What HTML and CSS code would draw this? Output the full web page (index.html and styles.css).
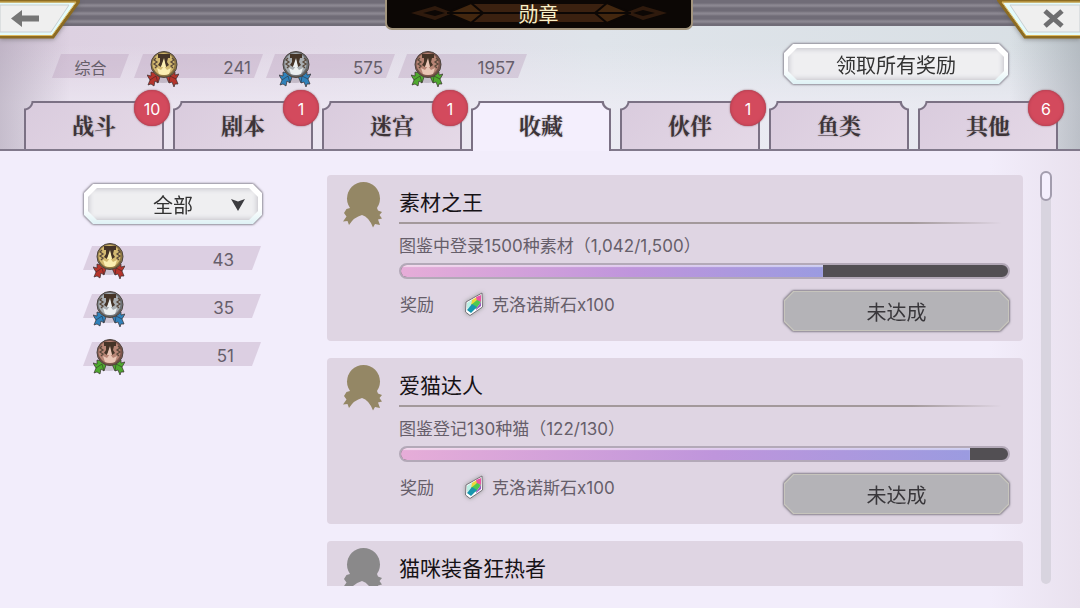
FILE: index.html
```
<!DOCTYPE html>
<html lang="zh-CN">
  <head>
    <meta charset="UTF-8">
    <meta name="viewport" content="width=device-width, initial-scale=1.0">
    <title>勋章</title>
    <link rel="stylesheet" href="styles.css">
  </head>

  <body>
    <svg class="sprite" aria-hidden="true">
      <symbol id="medal" viewBox="0 0 32 38">
        <ellipse cx="16" cy="29" rx="9" ry="4" fill="#5a4a5a" opacity=".25"/>
        <path d="M4 22 L14 24 L11 33 L8 31 L7 36 L4 34 L1 35 L3 30 L0 25 L4 26 Z M28 22 L18 24 L22 33 L25 32 L27 37 L28 34 L31 34 L29 29 L32 24 L28 25 Z" fill="var(--ribbon)" stroke="#3a2f2f" stroke-width=".7" stroke-linejoin="round"/>
        <path d="M3 30 L9 26 L11 33 M29 29 L23 26 L22 33" fill="none" stroke="#2a2024" stroke-width="1" opacity=".5"/>
        <circle cx="17" cy="14.500" r="13" fill="var(--rim)" stroke="#4c4440" stroke-width="1"/>
        <circle cx="16.500" cy="14" r="11" fill="var(--coin)"/>
        <path d="M11 4 H23 V8 H21 L20 12 L22 15 L19 17 L17 10 L14 17 L11 15 L13 12 V8 H11 Z" fill="#453427"/>
        <path d="M17 8 L19 17 H14 Z" fill="var(--shine)"/>
        <path d="M9 8 L7 10 L10 12 L7 14 L10 16 L8 18 M25 8 L27 10 L24 12 L27 14 L24 16 L26 18" fill="none" stroke="#5a493b" stroke-width="1.300"/>
        <path d="M10 18 L14 20 L17 16 L20 20 L24 18 L22 24 Q17 26 12 24 Z" fill="var(--shine)"/>
        <path d="M6 19 Q10 27 17 27 Q24 27 28 19" fill="none" stroke="#5a493b" stroke-width="1" opacity=".6"/>
      </symbol>
      <symbol id="medal-shape" viewBox="0 0 40 46">
        <circle cx="20.500" cy="16.500" r="16.500" fill="currentColor"/>
        <path d="M7 26 L34 26 L35 28.500 L39 30 L36.500 33 L39 36.500 L35 37.500 L37 43 L32 42 L30 45.500 Q26 35 19 33 Q11 35 6 43 L4.500 39 L0 39.500 L3.500 34.500 L1 31 L3.500 27 Z" fill="currentColor"/>
      </symbol>
      <symbol id="gem" viewBox="0 0 20 24">
        <path d="M2 10 L18 1 L18.500 15 L6 23.500 L1.500 20 Z" fill="#fff" stroke="#77737a" stroke-width="1"/>
        <path d="M3 11 L9 7 L8 13 L3 17 Z" fill="#bdf0e4"/>
        <path d="M8 8 L13 5 L14 10 L7 14 Z" fill="#efd63c"/>
        <path d="M12 5 L17 3 L17 10 L13 9 Z" fill="#ea55a4"/>
        <path d="M7 13 L13 8 L17 10 L12 17 Z" fill="#4fc950"/>
        <path d="M3 18 L8 12 L13 15 L7 21 Z" fill="#1796ae"/>
        <path d="M12 17 L17 10 L17 14 L12 18 Z" fill="#9c58c4"/>
      </symbol>
    </svg>

    <header>
      <div class="topbar">
        <button class="corner" type="button" aria-label="返回">
          <svg width="80" height="39" viewBox="0 0 80 39">
            <path d="M0 1 H79 L53 37 H0" fill="#e4fbfb" stroke="#8c6b22" stroke-width="3"/>
            <path d="M0 2 H76 L52 35.500 H0" fill="none" stroke="#dcb85c" stroke-width="1"/>
            <path d="M0 5 H69 L51 32 H0 Z" fill="#efefef" stroke="#c9cfd2" stroke-width="1"/>
            <path d="M11 18.500 L22 10 V15.500 H39 V21.500 H22 V27 Z" fill="#767676"/>
          </svg>
        </button>
        <h1 class="plate">
          <svg class="plate-art" viewBox="0 0 304 26" preserveAspectRatio="none" aria-hidden="true">
            <path d="M84 4 H220 L211 13 L220 22 H84 L94 13 Z" fill="#3b2110"/>
            <path d="M60 13 L84 3 L96 13 L84 23 Z M244 13 L220 3 L208 13 L220 23 Z" fill="#43270f" stroke="#0c0705" stroke-width="2"/>
            <path d="M24 13 L48 6 L66 13 L48 20 Z M280 13 L256 6 L238 13 L256 20 Z" fill="#2f1a0d"/>
            <path d="M36 13 L48 10 L58 13 L48 16 Z M268 13 L256 10 L246 13 L256 16 Z" fill="#0c0705"/>
            <path d="M60 13 H244" stroke="#0c0705" stroke-width="2"/>
          </svg>
          <span>勋章</span>
        </h1>
        <button class="corner" type="button" aria-label="关闭">
          <svg width="83" height="39" viewBox="0 0 83 39">
            <path d="M83 1 H2 L28 37 H83" fill="#e4fbfb" stroke="#8c6b22" stroke-width="3"/>
            <path d="M83 2 H5 L29 35.500 H83" fill="none" stroke="#dcb85c" stroke-width="1"/>
            <path d="M83 5 H13 L31 32 H83 Z" fill="#efefef" stroke="#c9cfd2" stroke-width="1"/>
            <path d="M48 11 L65 26 M65 11 L48 26" stroke="#6e6e70" stroke-width="5"/>
          </svg>
        </button>
      </div>

      <div class="summary">
        <ul class="totals">
          <li class="chip chip-label">综合</li>
          <li class="chip gold"><svg class="medal"><use href="#medal"/></svg>241</li>
          <li class="chip silver"><svg class="medal"><use href="#medal"/></svg>575</li>
          <li class="chip bronze"><svg class="medal"><use href="#medal"/></svg>1957</li>
        </ul>
        <button class="btn btn-claim" type="button">领取所有奖励</button>
      </div>

      <nav class="tabs">
        <button class="tab" type="button">战斗<span class="badge">10</span></button>
        <button class="tab" type="button">剧本<span class="badge">1</span></button>
        <button class="tab" type="button">迷宫<span class="badge">1</span></button>
        <button class="tab active" type="button">收藏</button>
        <button class="tab" type="button">伙伴<span class="badge">1</span></button>
        <button class="tab" type="button">鱼类</button>
        <button class="tab" type="button">其他<span class="badge">6</span></button>
      </nav>
    </header>

    <main>
      <aside>
        <div class="btn filter">
          <select aria-label="筛选">
            <option>全部</option>
          </select>
          <svg class="arrow" width="14" height="12" viewBox="0 0 14 12" aria-hidden="true">
            <path d="M0 0 L7 2.500 L14 0 L7 12 Z" fill="#3c3c40"/>
          </svg>
        </div>
        <ul class="counts">
          <li class="chip gold"><svg class="medal"><use href="#medal"/></svg>43</li>
          <li class="chip silver"><svg class="medal"><use href="#medal"/></svg>35</li>
          <li class="chip bronze"><svg class="medal"><use href="#medal"/></svg>51</li>
        </ul>
      </aside>

      <section class="list">
        <article class="card">
          <svg class="card-medal"><use href="#medal-shape"/></svg>
          <div class="card-body">
            <h2>素材之王</h2>
            <p class="desc">图鉴中登录1500种素材（1,042/1,500）</p>
            <div class="bar"><div class="bar-fill" style="width: 69.5%"></div></div>
            <div class="card-foot">
              <span class="reward-label">奖励</span>
              <svg class="gem"><use href="#gem"/></svg>
              <span>克洛诺斯石x100</span>
              <button class="btn btn-off" type="button" disabled>未达成</button>
            </div>
          </div>
        </article>

        <article class="card">
          <svg class="card-medal"><use href="#medal-shape"/></svg>
          <div class="card-body">
            <h2>爱猫达人</h2>
            <p class="desc">图鉴登记130种猫（122/130）</p>
            <div class="bar"><div class="bar-fill" style="width: 93.8%"></div></div>
            <div class="card-foot">
              <span class="reward-label">奖励</span>
              <svg class="gem"><use href="#gem"/></svg>
              <span>克洛诺斯石x100</span>
              <button class="btn btn-off" type="button" disabled>未达成</button>
            </div>
          </div>
        </article>

        <article class="card">
          <svg class="card-medal grey"><use href="#medal-shape"/></svg>
          <div class="card-body">
            <h2>猫咪装备狂热者</h2>
          </div>
        </article>
      </section>

      <div class="scrollbar"><div class="thumb"></div></div>
    </main>
  </body>
</html>
```
FILE: styles.css
```
* {
  box-sizing: border-box;
  padding: 0;
  margin: 0;
}

body {
  display: flex;
  flex-direction: column;
  height: 100vh;
  overflow: hidden;
  background-color: #f2edfb;
  color: #665e6a;
  font-family: Inter, "Noto Sans CJK SC", sans-serif;
  font-size: 17px;
}

ul {
  list-style: none;
}

button, select {
  font: inherit;
  color: inherit;
  background: none;
  border: none;
}

.sprite {
  position: absolute;
  width: 0;
  height: 0;
}

/* header */

header {
  background:
    linear-gradient(90deg, #a79daf88 0, #a79daf00 70px),
    linear-gradient(270deg, #8a929a77 0, #8a929a00 70px),
    linear-gradient(180deg, #f2eff800 30%, #f2eff899 70%),
    linear-gradient(90deg, #dccfe0 0%, #e1d8e6 30%, #dfe4ea 55%, #d8dfe4 100%);
  border-bottom: 2px solid #81798b;
}

.topbar {
  display: flex;
  justify-content: space-between;
  align-items: flex-start;
  height: 26px;
  background: repeating-linear-gradient(180deg, #706c77 0 3px, #8b8791 5px 6px, #706c77 8px);
}

.corner {
  cursor: pointer;
  filter: drop-shadow(0 1px 2px #5558);
}

.corner svg {
  display: block;
}

.plate {
  position: relative;
  width: 308px;
  height: 30px;
  background-color: #0c0705;
  border: 2px solid #a3957e;
  border-top: none;
  border-radius: 0 0 7px 7px;
  color: #f8f0c8;
  font-size: 20px;
  font-weight: 400;
  line-height: 30px;
  text-align: center;
}

.plate-art {
  position: absolute;
  top: 0;
  left: 0;
  width: 100%;
  height: 26px;
}

.plate span {
  position: relative;
}

.summary {
  display: flex;
  justify-content: space-between;
  align-items: flex-end;
  padding: 17px 71px 16px 52px;
}

.totals {
  display: flex;
  gap: 3px;
  padding-bottom: 7px;
}

.chip {
  position: relative;
  z-index: 0;
  width: 129px;
  height: 24px;
  padding-right: 12px;
  line-height: 28px;
  text-align: right;
}

.chip::before {
  content: "";
  position: absolute;
  inset: 0;
  z-index: -1;
  background-color: #bba3bd66;
  clip-path: polygon(9px 0, 100% 0, calc(100% - 9px) 100%, 0 100%);
}

.chip-label {
  width: 77px;
  margin-right: 2px;
  padding: 0;
  font-size: 16px;
  text-align: center;
}

.medal {
  position: absolute;
  left: 13px;
  top: -4px;
  width: 32px;
  height: 38px;
}

.gold {
  --coin: #d3b971;
  --rim: #8f7843;
  --shine: #fbeeb2;
  --ribbon: #b5352c;
}

.silver {
  --coin: #a9aeb2;
  --rim: #6f7377;
  --shine: #eceff0;
  --ribbon: #3182bb;
}

.bronze {
  --coin: #b78575;
  --rim: #7d564c;
  --shine: #e9c5b5;
  --ribbon: #4fa92f;
}

/* bevelled plates with cut corners */

.btn {
  position: relative;
  z-index: 0;
  height: 42px;
  padding-top: 4px;
  color: #333;
  font-size: 20px;
  line-height: 38px;
  filter: drop-shadow(0 0 1px #85808c) drop-shadow(0 0 1px #85808c);
}

.btn::before, .btn::after {
  content: "";
  position: absolute;
  z-index: -1;
  clip-path: polygon(9px 0, calc(100% - 9px) 0, 100% 9px, 100% calc(100% - 9px), calc(100% - 9px) 100%, 9px 100%, 0 calc(100% - 9px), 0 9px);
}

.btn::before {
  inset: 1px;
  background: linear-gradient(180deg, #fff 0 60%, #dff2f5);
}

.btn::after {
  inset: 5px;
  background-color: #efeff1;
  box-shadow: inset 0 0 5px 1px #c3c1c8;
}

.btn-claim {
  width: 226px;
  cursor: pointer;
}

.btn-off {
  width: 227px;
  margin-left: auto;
  color: #39373b;
  filter: drop-shadow(0 0 1px #6f6a74) drop-shadow(0 0 1px #85808c);
}

.btn-off::before {
  background: #c6c4bc;
}

.btn-off::after {
  inset: 2px;
  background-color: #b4b3b7;
  box-shadow: none;
}

/* tabs */

.tabs {
  display: grid;
  grid-template-columns: repeat(7, 1fr);
  gap: 9px;
  padding: 0 22px 0 24px;
}

.tab {
  position: relative;
  z-index: 0;
  height: 48px;
  color: #3d3438;
  font-family: "Noto Serif CJK SC", "Noto Sans CJK SC", serif;
  font-size: 22px;
  font-weight: 700;
  line-height: 48px;
  text-shadow: 0 0 2px #3d343866;
  cursor: pointer;
}

.tab::before {
  content: "";
  position: absolute;
  inset: 0;
  z-index: -1;
  border: 2px solid #7b7184;
  border-bottom: none;
  background:
    radial-gradient(circle at 0 0, #7b7184 9px, #7b718400 10px) border-box,
    radial-gradient(circle at 100% 0, #7b7184 9px, #7b718400 10px) border-box,
    linear-gradient(135deg, #d9cbdd, #e5d9e7) border-box;
  -webkit-mask:
    radial-gradient(circle at 0 0, #0000 7px, #000 8px) left / 51% 100% no-repeat,
    radial-gradient(circle at 100% 0, #0000 7px, #000 8px) right / 51% 100% no-repeat;
  mask:
    radial-gradient(circle at 0 0, #0000 7px, #000 8px) left / 51% 100% no-repeat,
    radial-gradient(circle at 100% 0, #0000 7px, #000 8px) right / 51% 100% no-repeat;
}

.tab.active::before {
  bottom: -2px;
  background:
    radial-gradient(circle at 0 0, #7b7184 9px, #7b718400 10px) border-box,
    radial-gradient(circle at 100% 0, #7b7184 9px, #7b718400 10px) border-box,
    #f4effd;
}

.badge {
  position: absolute;
  top: -11px;
  right: -6px;
  width: 36px;
  height: 36px;
  border-radius: 50%;
  background-color: #d34a5d;
  box-shadow: inset 0 0 3px #a33848, 0 0 2px #8a5560;
  color: #fff;
  font-family: Inter, sans-serif;
  font-size: 16px;
  font-weight: 400;
  line-height: 38px;
  text-align: center;
  text-shadow: none;
}

/* content */

main {
  flex: 1;
  min-height: 0;
  display: flex;
  padding: 24px 28px 22px 83px;
  background: linear-gradient(270deg, #e9e1ee 0, #f2edfb 90px);
}

aside {
  width: 180px;
  margin-right: 64px;
  padding-top: 8px;
}

.filter select {
  display: block;
  width: 100%;
  height: 38px;
  appearance: none;
  text-align: center;
  text-align-last: center;
  cursor: pointer;
}

.arrow {
  position: absolute;
  top: 16px;
  right: 18px;
  pointer-events: none;
}

.counts {
  display: flex;
  flex-direction: column;
  gap: 24px;
  margin-top: 21px;
}

.counts .chip {
  width: 178px;
  padding-right: 27px;
}

.counts .medal {
  left: 10px;
}

.list {
  flex: 1;
  display: flex;
  flex-direction: column;
  gap: 17px;
  overflow: hidden;
}

.card {
  flex: none;
  display: flex;
  gap: 16px;
  min-height: 166px;
  padding: 7px 13px 9px 16px;
  border-radius: 4px;
  background-color: #dfd5e3;
}

.card-medal {
  flex: none;
  width: 40px;
  height: 46px;
  color: #948765;
}

.card-medal.grey {
  color: #8a898a;
}

.card-body {
  flex: 1;
}

h2 {
  padding-top: 2px;
  color: #161216;
  font-size: 21px;
  font-weight: 400;
  line-height: 38px;
}

h2::after {
  content: "";
  display: block;
  height: 2px;
  margin-right: 8px;
  background: linear-gradient(90deg, #a3999b 85%, #a3999b00);
}

.desc {
  margin-top: 10px;
  line-height: 24px;
}

.bar {
  height: 16px;
  margin: 5px 0 11px;
  border: 2px solid #b3a9b8;
  border-radius: 8px;
  background-color: #524f53;
  overflow: hidden;
}

.bar-fill {
  height: 100%;
  background: linear-gradient(90deg, #e6add8, #bf95dc 55%, #9b9be0);
  box-shadow: inset 0 2px 1px #ffffff88;
}

.card-foot {
  display: flex;
  line-height: 30px;
}

.reward-label {
  width: 65px;
  padding-left: 1px;
}

.gem {
  width: 20px;
  height: 24px;
  margin: 2px 8px 0 0;
  filter: drop-shadow(0 0 2px #5a6a5a88);
}

.scrollbar {
  width: 10px;
  margin: -4px 1px 2px 18px;
  border-radius: 5px;
  background-color: #d8d4df;
}

.thumb {
  width: 12px;
  height: 30px;
  margin-left: -1px;
  border: 2px solid #a39dae;
  border-radius: 6px;
  background-color: #f4effd;
}
```
